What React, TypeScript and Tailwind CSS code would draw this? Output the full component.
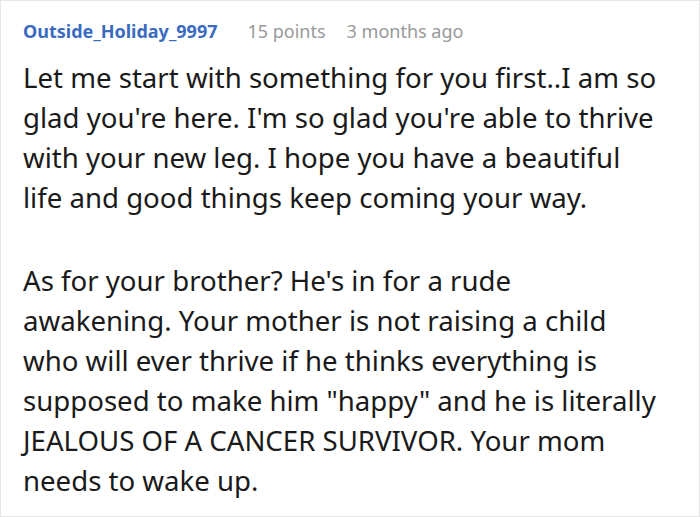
export default function App() {
  return (
    <div className="min-h-screen bg-white">
      <div className="h-[517px] w-[700px] overflow-hidden border border-[#e6e6e6] bg-white pl-[22px] pr-[39px] pt-[16px] font-['Noto_Sans',sans-serif]">
        <div className="flex items-baseline text-[18px] leading-[28px]">
          <span className="font-bold text-[#3a6bbf]">Outside_Holiday_9997</span>
          <span className="ml-[30px] text-[#999999]">15 points</span>
          <span className="ml-[21px] text-[#999999]">3 months ago</span>
        </div>
        <div className="mt-[12px] text-[27.6px] leading-[40px] text-[#1a1a1a]">
          <p>
            Let me start with something for you first..I am so glad you're here. I'm so glad you're able to thrive
            with your new leg. I hope you have a beautiful life and good things keep coming your way.
          </p>
          <p className="mt-[43px]">
            As for your brother? He's in for a rude awakening. Your mother is not raising a child who will ever thrive
            if he thinks everything is supposed to make him "happy" and he is literally JEALOUS OF A CANCER SURVIVOR.
            Your mom needs to wake up.
          </p>
        </div>
      </div>
    </div>
  );
}
